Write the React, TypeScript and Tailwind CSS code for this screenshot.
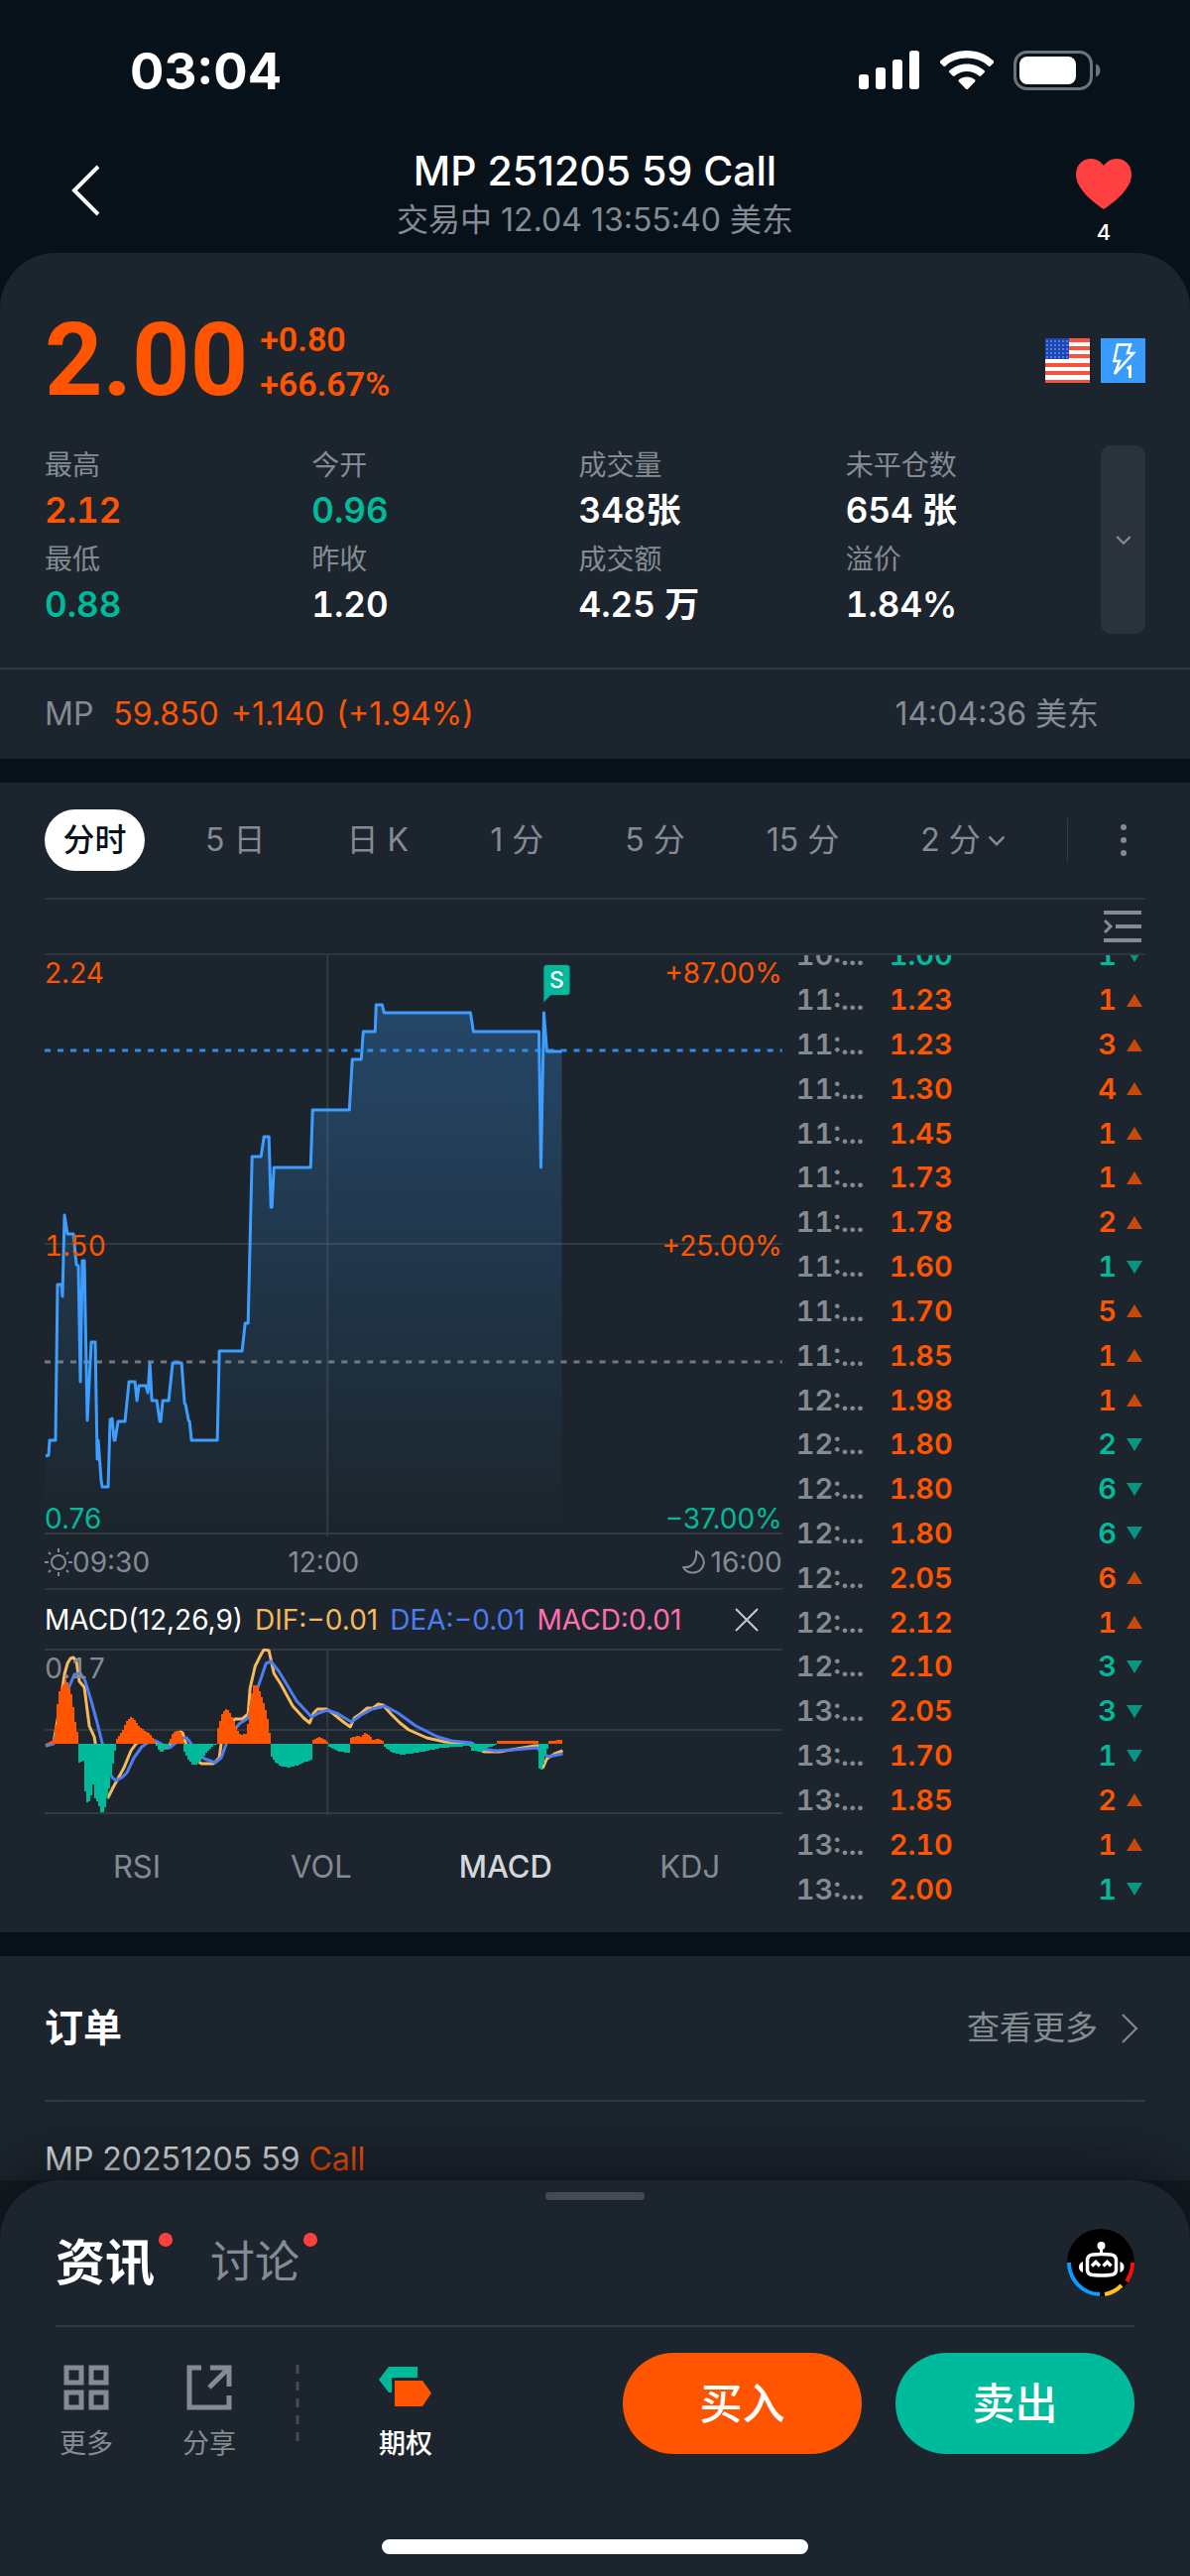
import type { ReactNode } from "react";

const PANEL = "bg-[#1c252d]";
const ORANGE = "text-[#ff5500]";
const GREEN = "text-[#00ba9c]";
const GRAY = "text-[#858b93]";

type Tone = "up" | "down" | "flat";
const toneClass: Record<Tone, string> = { up: ORANGE, down: GREEN, flat: "text-white" };

const stats: { label: string; value: string; tone: Tone }[] = [
  { label: "最高", value: "2.12", tone: "up" },
  { label: "今开", value: "0.96", tone: "down" },
  { label: "成交量", value: "348张", tone: "flat" },
  { label: "未平仓数", value: "654 张", tone: "flat" },
  { label: "最低", value: "0.88", tone: "down" },
  { label: "昨收", value: "1.20", tone: "flat" },
  { label: "成交额", value: "4.25 万", tone: "flat" },
  { label: "溢价", value: "1.84%", tone: "flat" },
];

const trades: [string, string, number, boolean][] = [
  ["10:...", "1.00", 1, false],
  ["11:...", "1.23", 1, true],
  ["11:...", "1.23", 3, true],
  ["11:...", "1.30", 4, true],
  ["11:...", "1.45", 1, true],
  ["11:...", "1.73", 1, true],
  ["11:...", "1.78", 2, true],
  ["11:...", "1.60", 1, false],
  ["11:...", "1.70", 5, true],
  ["11:...", "1.85", 1, true],
  ["12:...", "1.98", 1, true],
  ["12:...", "1.80", 2, false],
  ["12:...", "1.80", 6, false],
  ["12:...", "1.80", 6, false],
  ["12:...", "2.05", 6, true],
  ["12:...", "2.12", 1, true],
  ["12:...", "2.10", 3, false],
  ["13:...", "2.05", 3, false],
  ["13:...", "1.70", 1, false],
  ["13:...", "1.85", 2, true],
  ["13:...", "2.10", 1, true],
  ["13:...", "2.00", 1, false],
];

const pricePoints =
  "1,505 4,504 5,489 11,489 13,332 17,332 18,344 20,262 23,281 29,281 32,312 34,313 36,430 38,308 40,308 43,469 47,390 51,390 53,508 54,489 57,530 58,536 64,536 66,468 68,467 70,489 71,489 74,470 81,470 85,430 91,430 93,449 95,434 102,434 104,441 106,411 108,449 113,449 116,470 117,470 119,449 125,449 129,411 138,411 141,452 142,453 145,469 146,470 148,489 174,489 176,399 199,399 202,371 205,371 209,203 218,203 221,183 226,183 228,254 229,254 231,214 268,214 270,156 307,156 310,105 319,105 321,77 333,77 334,50 340,50 342,58 429,58 432,77 498,77 500,214 503,58 506,97 521,97";

const difPoints =
  "1,98 9,95 14,66 20,26 23,15 26,10 29,9 32,13 35,33 40,39 45,78 50,89 53,106 58,143 64,150 69,140 74,131 80,120 87,103 92,96 103,91 110,93 118,98 124,100 130,90 137,84 139,85 142,95 149,110 158,116 170,116 176,110 178,95 185,76 192,71 199,71 205,66 207,40 212,18 218,6 221,1 226,2 229,16 231,25 238,36 250,58 261,70 267,75 271,65 275,61 284,61 290,65 301,74 308,79 312,70 318,66 325,60 331,60 336,56 341,57 349,66 358,75 367,82 385,90 403,94 427,96 436,101 443,104 458,104 476,101 494,98 498,98 502,120 506,111 514,106 522,103";

const deaPoints =
  "1,98 9,96 18,63 25,38 30,26 36,25 41,33 47,53 53,75 58,95 63,118 68,130 72,133 78,130 83,125 90,110 98,99 105,94 112,93 119,97 126,100 132,95 138,90 143,90 147,95 154,105 161,111 172,115 178,110 183,96 189,85 196,76 205,70 210,53 218,30 223,15 228,13 236,23 254,53 269,69 276,65 285,62 296,66 309,74 319,67 330,61 343,58 356,65 374,78 396,89 410,93 430,95 439,101 454,103 472,102 496,100 502,106 508,109 522,106";

const histogram: [number, number][] = [
  [2, 1], [9, 5], [11, 33], [14, 53], [18, 60], [20, 65], [22, 62], [24, 57], [26, 50], [28, 37], [30, 22], [32, 12],
  [33, -19], [38, -17], [39, -40], [41, -57], [43, -61], [46, -52], [48, -41], [50, -55], [53, -60], [56, -69], [59, -69], [62, -55], [64, -45], [68, -20], [71, -1],
  [72, 5], [78, 14], [82, 23], [86, 27], [90, 24], [94, 18], [100, 13], [104, 11], [108, 6], [111, 1],
  [112, -2], [115, -8], [117, -9], [120, -6], [124, -2],
  [125, 3], [128, 10], [132, 13], [137, 12], [139, 2],
  [140, -8], [144, -16], [148, -21], [152, -21], [157, -16], [162, -9], [170, -1],
  [173, 6], [174, 16], [178, 30], [181, 35], [185, 33], [189, 25], [194, 13], [197, 9], [203, 10], [205, 30], [207, 47], [210, 59], [214, 58], [217, 50], [221, 38], [225, 20], [227, 1],
  [228, -13], [232, -19], [238, -23], [246, -24], [256, -21], [268, -16],
  [269, 3], [275, 7], [279, 6], [285, 1],
  [286, -3], [295, -8], [307, -9],
  [308, 6], [314, 8], [318, 7], [322, 11], [327, 8], [330, 4], [335, 5], [341, 2],
  [342, -3], [348, -8], [358, -11], [375, -9], [400, -4], [428, -2], [430, -7], [440, -8], [446, -4], [455, -1],
  [456, 3], [497, 3],
  [498, -25], [501, -27], [503, -15], [507, -2],
  [508, 3], [522, 4],
];

function buildBars(sign: 1 | -1): string {
  let d = "";
  let i = 0;
  for (let x = 2; x < 522; x += 2) {
    while (i < histogram.length - 2 && histogram[i + 1][0] <= x) i++;
    const [x0, h0] = histogram[i];
    const [x1, h1] = histogram[i + 1];
    const h = h0 * h1 < 0 ? h0 : h0 + ((h1 - h0) * (x - x0)) / (x1 - x0);
    if (h * sign <= 0) continue;
    d += `M${x} 96V${96 - Math.round(h)}h2V96z`;
  }
  return d;
}
const upBars = buildBars(1);
const downBars = buildBars(-1);

function Chevron({ className, d = "M3 8l9 9 9-9", w = 2 }: { className: string; d?: string; w?: number }) {
  return (
    <svg viewBox="0 0 24 24" fill="none" stroke="currentColor" strokeWidth={w} className={className} aria-hidden="true">
      <path d={d} />
    </svg>
  );
}

function StatusBar() {
  return (
    <div className="flex h-[142px] items-center justify-between pr-[90px] pl-[131px] text-white">
      <span className="text-[51px] leading-none font-bold">03:04</span>
      <div className="flex items-center gap-5">
        <svg viewBox="0 0 62 40" className="h-10 w-[62px]" fill="currentColor" aria-hidden="true">
          <rect x="0" y="24" width="10" height="15" rx="3" />
          <rect x="17" y="17" width="10" height="22" rx="3" />
          <rect x="34" y="9" width="10" height="30" rx="3" />
          <rect x="51" y="0" width="10" height="39" rx="3" />
        </svg>
        <svg viewBox="0 0 54 40" className="h-10 w-[54px]" fill="currentColor" aria-hidden="true">
          <path d="M27 0C16.500 0 7 4 0 10.500q-.8.9 0 1.800l3.400 3.400q.9.8 1.800 0C11 10.400 18.600 7.600 27 7.600s16 2.800 21.800 8.100q.9.800 1.800 0L54 12.300q.8-.9 0-1.800C47 4 37.500 0 27 0z" />
          <path d="M27 13.500c-6.800 0-13 2.600-17.700 6.800q-.9.900 0 1.800l3.500 3.500q.9.800 1.800 0C18 22.700 22.300 21 27 21s9 1.700 12.400 4.600q.9.800 1.800 0l3.500-3.500q.9-.9 0-1.800C40 16.100 33.800 13.500 27 13.500z" />
          <path d="M27 26.500c-3.200 0-6 1.100-8.200 3q-.9.900 0 1.800l7.200 7.400q1 .9 2 0l7.200-7.400q.9-.9 0-1.800c-2.200-1.900-5-3-8.200-3z" />
        </svg>
        <svg viewBox="0 0 88 40" className="h-10 w-[88px]" aria-hidden="true">
          <rect x="1.500" y="1.500" width="77" height="37" rx="12" fill="none" stroke="#6d737a" strokeWidth="3" />
          <rect x="6" y="6" width="57" height="28" rx="8" fill="#fff" />
          <path d="M83 13.500c3 1.200 4.500 3.500 4.500 6.500s-1.500 5.300-4.500 6.500z" fill="#6d737a" />
        </svg>
      </div>
    </div>
  );
}

function Header() {
  return (
    <header className="grid h-[113px] grid-cols-[1fr_auto_1fr] items-start px-14">
      <button aria-label="返回" className="flex h-[100px] w-20 items-center text-white">
        <svg viewBox="0 0 44 52" className="h-[52px] w-11" fill="none" stroke="currentColor" strokeWidth="4" aria-hidden="true">
          <path d="M43 2L19 26l24 24" />
        </svg>
      </button>
      <div className="text-center">
        <h1 className="pt-1 text-[41px] leading-[52px] font-medium text-white">MP 251205 59 Call</h1>
        <p className={`text-[32px] leading-[48px] ${GRAY}`}>交易中 12.04 13:55:40 美东</p>
      </div>
      <button aria-label="自选" className="flex w-[62px] flex-col items-center justify-self-end pt-4 text-white">
        <svg viewBox="0 0 56 54" className="h-[54px] w-14" fill="#ff4040" aria-hidden="true">
          <path d="M28 53C19 47 0 33 0 18 0 8 7 2 15 2c6 0 10 3 13 7 3-4 7-7 13-7 8 0 15 6 15 16 0 15-19 29-28 35z" />
        </svg>
        <span className="mt-2 text-[22px] leading-7 font-medium">4</span>
      </button>
    </header>
  );
}

function FlagIcon() {
  return (
    <svg viewBox="0 0 45 45" className="size-[45px]" role="img" aria-label="美国">
      <rect width="45" height="45" fill="#fff" />
      {[0, 8, 16, 25, 33, 42].map((y) => (
        <rect key={y} y={y} width="45" height="4" fill="#f5533d" />
      ))}
      <rect width="24" height="21" fill="#1a47b8" />
      {[3, 7, 11, 15, 19].map((y) =>
        [2, 6, 10, 14, 18, 22].map((x) => <circle key={`${x}-${y}`} cx={x} cy={y} r=".8" fill="#a9c0ee" />)
      )}
    </svg>
  );
}

function Quote() {
  return (
    <section className={`rounded-t-[56px] ${PANEL}`}>
      <div className="flex items-center px-[45px] pt-[58px]">
        <strong className={`font-[Roboto] text-[102px] leading-[100px] font-bold ${ORANGE}`}>2.00</strong>
        <div className={`ml-3 pt-1 font-[Roboto] text-[34px] leading-[45px] font-semibold ${ORANGE}`}>
          <p>+0.80</p>
          <p>+66.67%</p>
        </div>
        <div className="ml-auto flex gap-[11px]">
          <FlagIcon />
          <svg viewBox="0 0 45 45" className="size-[45px]" role="img" aria-label="实时行情">
            <rect width="45" height="45" fill="#389cff" />
            <path d="M17 6.500h13l-3 8.500h6L14 36l5-13h-5.500z" fill="none" stroke="#fff" strokeWidth="2.500" strokeLinejoin="miter" />
            <path d="M26.500 30.500l3-1.500v11" fill="none" stroke="#fff" strokeWidth="3" />
          </svg>
        </div>
      </div>
      <div className="mt-9 flex items-start px-[45px]">
        <dl className="grid flex-1 grid-cols-4 gap-y-[5px]">
          {stats.map((s) => (
            <div key={s.label} className="flex flex-col">
              <dt className={`text-[28px] leading-10 ${GRAY}`}>{s.label}</dt>
              <dd className={`text-[35px] leading-[50px] font-semibold tabular-nums ${toneClass[s.tone]}`}>{s.value}</dd>
            </div>
          ))}
        </dl>
        <button aria-label="展开" className={`-ml-3 flex h-[190px] w-[45px] items-center justify-center rounded-[10px] bg-[#2a323a] ${GRAY}`}>
          <Chevron className="size-[18px]" w={3} />
        </button>
      </div>
      <div className="mt-[34px] flex h-[92px] items-center border-t-2 border-[#303a42] pr-[92px] pl-[45px] text-[32px]">
        <span className={`mr-5 ${GRAY}`}>MP</span>
        <span className={`flex gap-3 text-[32px] ${ORANGE}`}>
          <span>59.850</span>
          <span>+1.140</span>
          <span>(+1.94%)</span>
        </span>
        <span className={`ml-auto ${GRAY}`}>14:04:36 美东</span>
      </div>
    </section>
  );
}

function PeriodTabs() {
  return (
    <nav className={`flex h-[118px] items-center justify-between border-b-2 border-[#2c363d] text-[32px] ${GRAY}`}>
      <button className="flex h-[62px] w-[101px] items-center justify-center rounded-full bg-white font-medium text-[#0a131b]">分时</button>
      {["5 日", "日 K", "1 分", "5 分", "15 分"].map((label) => (
        <button key={label} className="px-[21px]">{label}</button>
      ))}
      <button className="flex items-center gap-[6px] px-[21px]">
        2 分
        <Chevron className="size-5" w={3} />
      </button>
      <div className="flex items-center gap-[34px]">
        <span className="h-11 w-px bg-[#303a42]" />
        <button aria-label="更多设置" className="flex h-11 w-[44px] justify-center">
          <svg viewBox="0 0 6 44" className="h-11 w-[6px]" fill="currentColor" aria-hidden="true">
            <circle cx="3" cy="9" r="3" />
            <circle cx="3" cy="22" r="3" />
            <circle cx="3" cy="35" r="3" />
          </svg>
        </button>
      </div>
    </nav>
  );
}

function GridLine({ d }: { d: string }) {
  return <path d={d} stroke="#fff" strokeOpacity=".1" strokeWidth="2" fill="none" vectorEffect="non-scaling-stroke" />;
}

function PriceChart() {
  return (
    <div className="relative h-[586px] text-[28px] leading-9">
      <svg viewBox="0 0 743 586" preserveAspectRatio="none" className="h-full w-full" role="img" aria-label="分时走势">
        <defs>
          <linearGradient id="area" x1="0" y1="50" x2="0" y2="574" gradientUnits="userSpaceOnUse">
            <stop offset="0" stopColor="#3d9eff" stopOpacity=".28" />
            <stop offset="1" stopColor="#3d9eff" stopOpacity="0" />
          </linearGradient>
        </defs>
        <polygon points={`0,584 ${pricePoints} 521,584`} fill="url(#area)" />
        <GridLine d="M0 291H743M285 0V586M0 583H743" />
        <path d="M0 410H743" stroke="#737980" strokeWidth="3" strokeDasharray="6 7" />
        <path d="M0 96H743" stroke="#2e8df0" strokeWidth="3" strokeDasharray="6 7" />
        <polyline points={pricePoints} fill="none" stroke="#3d9eff" strokeWidth="3" strokeLinejoin="round" vectorEffect="non-scaling-stroke" />
        <path d="M503 47V13q0-3 3-3h20q3 0 3 3v24q0 3-3 3h-16z" fill="#00b89a" stroke="#2a333b" strokeWidth="2" paintOrder="stroke" />
        <text x="516" y="33" textAnchor="middle" fontFamily="Inter" fontSize="23" fontWeight="500" fill="#fff">S</text>
      </svg>
      <div className={`pointer-events-none absolute inset-0 ${ORANGE}`}>
        <div className="absolute inset-x-0 top-0 flex justify-between"><span>2.24</span><span>+87.00%</span></div>
        <div className="absolute inset-x-0 top-1/2 flex -translate-y-1/2 justify-between"><span className="tabular-nums">1.50</span><span>+25.00%</span></div>
        <div className={`absolute inset-x-0 bottom-0 flex justify-between ${GREEN}`}><span>0.76</span><span>−37.00%</span></div>
      </div>
    </div>
  );
}

function MacdChart() {
  return (
    <div className="relative h-[168px]">
      <svg viewBox="0 0 743 168" preserveAspectRatio="none" className="h-full w-full" role="img" aria-label="MACD">
        <GridLine d="M0 1H743M0 82H743M0 166H743M285 0V168" />
        <polyline points={difPoints} fill="none" stroke="#f6b95b" strokeWidth="3" strokeLinejoin="round" />
        <polyline points={deaPoints} fill="none" stroke="#4d7cf3" strokeWidth="3" strokeLinejoin="round" />
        <path d={upBars} fill="#ff5500" shapeRendering="crispEdges" />
        <path d={downBars} fill="#00ba9c" shapeRendering="crispEdges" />
      </svg>
      <span className={`absolute top-0 left-0 text-[28px] leading-10 tabular-nums ${GRAY}`}>0.17</span>
    </div>
  );
}

function TradeTable() {
  return (
    <div className="flex h-[964px] flex-1 flex-col justify-end overflow-hidden pl-[14px]">
      <table className="h-[986px] w-full shrink-0 text-[29px] leading-9 font-semibold tabular-nums">
        <tbody>
          {trades.map(([time, price, size, up], i) => (
            <tr key={i}>
              <td className={`w-[94px] p-0 ${GRAY}`}>{time}</td>
              <td className={`p-0 ${price === "1.00" ? GREEN : ORANGE}`}>{price}</td>
              <td className={`p-0 ${up ? ORANGE : GREEN}`}>
                <span className="flex items-center justify-end gap-[10px] pr-[3px]">
                  {size}
                  <svg viewBox="0 0 16 13" className="h-[13px] w-4 opacity-75" fill="currentColor" role="img" aria-label={up ? "买" : "卖"}>
                    <path d={up ? "M8 0l8 13H0z" : "M0 0h16L8 13z"} />
                  </svg>
                </span>
              </td>
            </tr>
          ))}
        </tbody>
      </table>
    </div>
  );
}

function ChartPanel() {
  return (
    <section className={`mt-6 px-[45px] pb-3 ${PANEL}`}>
      <PeriodTabs />
      <div className="flex h-[56px] items-center justify-end border-b-2 border-[#2c363d] pr-1">
        <button aria-label="收起明细" className={GRAY}>
          <svg viewBox="0 0 38 34" className="h-[34px] w-[38px]" fill="none" stroke="currentColor" strokeWidth="4" aria-hidden="true">
            <path d="M0 3h38M12 17h26M0 31h38" />
            <path d="M1 11l6 6-6 6" strokeWidth="3" />
          </svg>
        </button>
      </div>
      <div className="flex">
        <div className="w-[67%]">
          <PriceChart />
          <div className={`flex h-[54px] items-center border-b-2 border-[#2c363d] text-[28px] ${GRAY}`}>
            <span className="flex w-[33%] items-center">
              <svg viewBox="0 0 28 28" className="size-7" fill="none" stroke="currentColor" strokeWidth="2" aria-hidden="true">
                <circle cx="14" cy="14" r="7" />
                <path d="M14 0v4M14 24v4M0 14h4M24 14h4M4 4l2 2M22 22l2 2M24 4l-2 2M6 22l-2 2" />
              </svg>
              09:30
            </span>
            <span>12:00</span>
            <span className="ml-auto flex items-center gap-1">
              <svg viewBox="0 0 26 26" className="size-[26px]" fill="none" stroke="currentColor" strokeWidth="2" strokeLinejoin="round" aria-hidden="true">
                <path d="M15 2c8 4 10 12 5 18-5 5-14 5-18-2 8 1 14-5 13-16z" />
              </svg>
              16:00
            </span>
          </div>
          <div className="flex h-[59px] items-center gap-3 text-[28px]">
            <span className="text-white">MACD(12,26,9)</span>
            <span className="text-[#f6b95b]">DIF:−0.01</span>
            <span className="text-[#4d7cf3]">DEA:−0.01</span>
            <span className="text-[#ff6fae]">MACD:0.01</span>
            <button aria-label="关闭指标" className="mr-6 ml-auto text-[#c5c8cc]">
              <Chevron className="size-6" d="M1 1l22 22M23 1L1 23" />
            </button>
          </div>
          <MacdChart />
          <div className={`grid h-[104px] grid-cols-4 items-center text-[31px] ${GRAY}`}>
            <button>RSI</button>
            <button>VOL</button>
            <button className="font-medium text-[#d5d7da]">MACD</button>
            <button>KDJ</button>
          </div>
        </div>
        <TradeTable />
      </div>
      <div className="h-[2px]" />
    </section>
  );
}

function Orders() {
  return (
    <section className={`mt-6 px-[45px] ${PANEL}`}>
      <div className="flex h-[147px] items-center justify-between border-b-2 border-[#303a42]">
        <h2 className="text-[39px] font-semibold text-white">订单</h2>
        <a href="#orders" className={`flex items-center gap-4 text-[33px] ${GRAY}`}>
          查看更多
          <svg viewBox="0 0 32 32" className="size-8" fill="none" stroke="currentColor" strokeWidth="2" aria-hidden="true">
            <path d="M9 2l14 14L9 30" />
          </svg>
        </a>
      </div>
      <p className="h-[79px] pt-[37px] text-[32px] leading-[42px] text-[#e4e6e8]">
        MP 20251205 59 <span className={ORANGE}>Call</span>
      </p>
    </section>
  );
}

function NewsTab({ active, children }: { active?: boolean; children: ReactNode }) {
  return (
    <button className={`relative leading-[60px] ${active ? "text-[50px] font-bold text-white" : `text-[45px] ${GRAY}`}`}>
      {children}
      <span className="absolute top-0 left-full ml-1 size-[14px] rounded-full bg-[#ff4040]" />
    </button>
  );
}

function Tool({ label, className, children }: { label: string; className: string; children: ReactNode }) {
  return (
    <button className={`flex w-[62px] flex-col items-center gap-4 text-[27px] leading-9 ${className}`}>
      {children}
      {label}
    </button>
  );
}

function BottomSheet() {
  return (
    <footer className={`relative rounded-t-[60px] px-14 shadow-[0_-10px_60px_rgba(8,12,18,0.7)] ${PANEL}`}>
      <div className="mx-auto h-5 w-[100px] pt-3"><div className="h-2 rounded-full bg-[#434a53]" /></div>
      <div className="flex h-[128px] items-center border-b-2 border-[#303a42]">
        <div className="flex flex-1 items-center gap-[56px]">
          <NewsTab active>资讯</NewsTab>
          <NewsTab>讨论</NewsTab>
        </div>
        <button aria-label="智能助手">
          <svg viewBox="0 0 68 68" className="size-[68px]" fill="none" aria-hidden="true">
            <circle cx="34" cy="34" r="34" fill="#000" />
            <path d="M2 34a32 32 0 0 0 31 32" stroke="#0a9cff" strokeWidth="4" />
            <path d="M38 66a32 32 0 0 0 17-9" stroke="#ffc21a" strokeWidth="4" />
            <path d="M60 53a32 32 0 0 0 6-19" stroke="#f50f0f" strokeWidth="4" />
            <path d="M26 26q9-1 18 0 5 .5 5.500 5v11q-.5 4-5.500 4.500-9 1-18 0-5-.5-5.500-4.500V31q.5-4.500 5.500-5z" stroke="#fff" strokeWidth="3.500" />
            <path d="M34.500 25v-6" stroke="#fff" strokeWidth="3" />
            <path d="M16 33v11q-4-1.500-4-5.500t4-5.500zM53.500 33v11q4-1.500 4-5.500t-4-5.500z" fill="#fff" />
            <circle cx="34.500" cy="17" r="4" fill="#fff" />
            <path d="M25 37.500l4-4 4 4M36.500 37.500l4-4 4 4" stroke="#fff" strokeWidth="3.500" />
          </svg>
        </button>
      </div>
      <div className="flex items-start pt-[26px] pb-[78px]">
        <div className={`flex flex-1 items-start pt-3 ${GRAY}`}>
          <Tool label="更多" className={GRAY}>
            <svg viewBox="0 0 46 46" className="size-[46px]" fill="none" stroke="currentColor" strokeWidth="5" aria-hidden="true">
              <path d="M3 3h15v15H3zM28 3h15v15H28zM3 28h15v15H3zM28 28h15v15H28z" />
            </svg>
          </Tool>
          <Tool label="分享" className={`ml-[62px] ${GRAY}`}>
            <svg viewBox="0 0 46 46" className="size-[46px]" fill="none" stroke="currentColor" strokeWidth="5" aria-hidden="true">
              <path d="M15 3H3v40h40V31M24 3h19v19M42 4L23 23" />
            </svg>
          </Tool>
          <svg viewBox="0 0 4 78" className="ml-[56px] h-[78px] w-1" aria-hidden="true">
            <path d="M2 0v78" stroke="#454c55" strokeWidth="3" strokeDasharray="9 8" />
          </svg>
          <Tool label="期权" className="ml-[76px] font-medium text-white">
            <svg viewBox="0 0 54 46" className="h-[46px] w-[54px]" aria-hidden="true">
              <path d="M10 2h29v11H13v15h-3L0 15z" fill="#00b89a" />
              <path d="M16 16h28l9 12.500L44 42H16z" fill="#ff5500" />
            </svg>
          </Tool>
        </div>
        <div className="flex gap-[34px] text-[43px] font-medium text-white">
          <button className="h-[102px] w-[241px] rounded-full bg-[#ff5500]">买入</button>
          <button className="h-[102px] w-[241px] rounded-full bg-[#00ba9c]">卖出</button>
        </div>
      </div>
      <div className="mx-auto h-[39px] w-[430px]"><div className="h-[15px] rounded-full bg-white" /></div>
    </footer>
  );
}

export default function App() {
  return (
    <main className="min-h-screen overflow-hidden bg-[#07111a] font-[Inter,'Noto_Sans_CJK_SC',sans-serif]" lang="zh-CN">
      <StatusBar />
      <Header />
      <Quote />
      <ChartPanel />
      <Orders />
      <div className="bg-[#141b22]">
        <BottomSheet />
      </div>
    </main>
  );
}
